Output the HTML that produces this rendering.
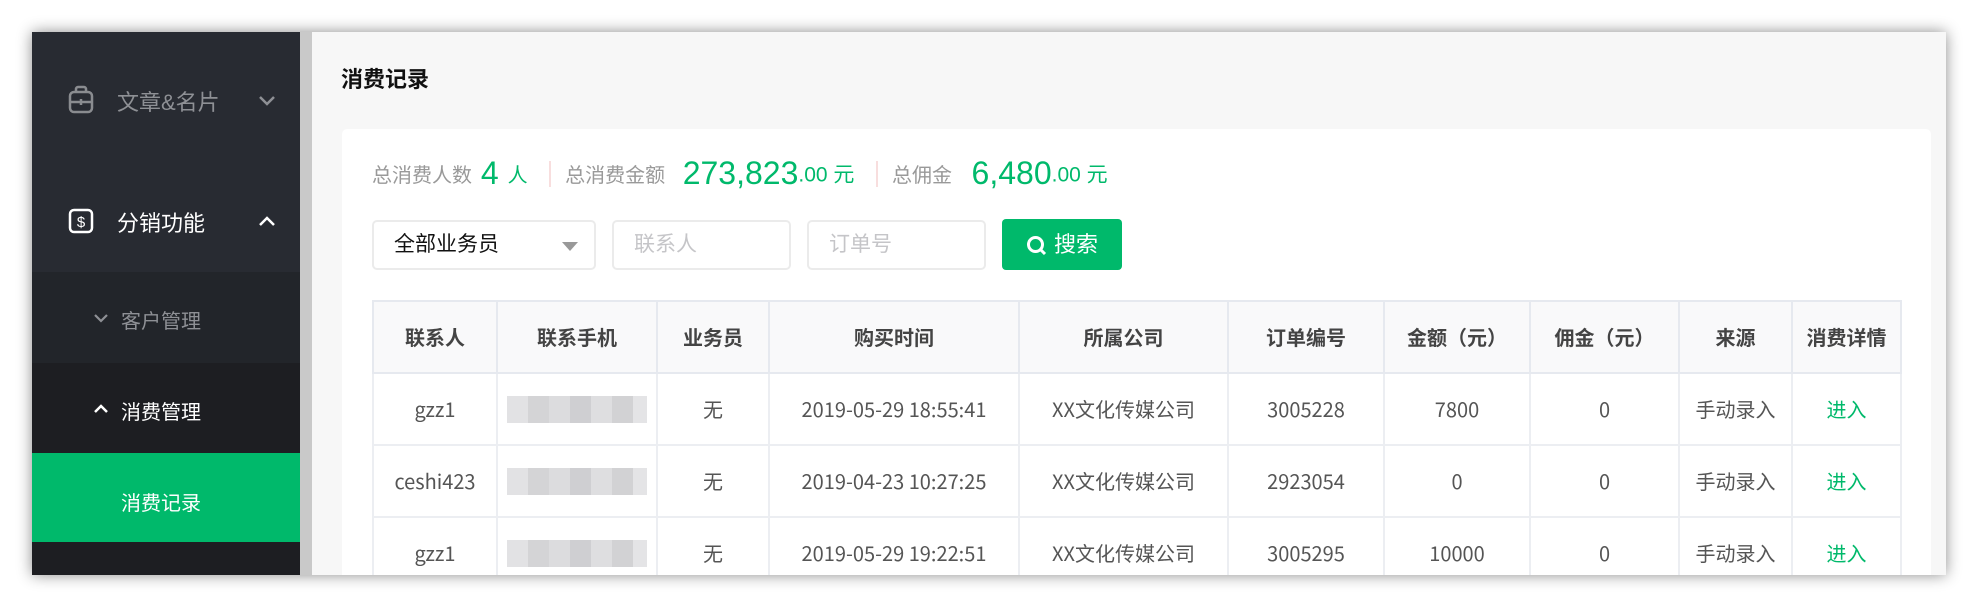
<!DOCTYPE html>
<html><head><meta charset="utf-8"><style>
*{box-sizing:border-box;margin:0;padding:0}
body{width:1978px;height:608px;background:#fff;font-family:"Liberation Sans","Noto Sans CJK SC",sans-serif;position:relative;overflow:hidden}
.win{position:absolute;left:32px;top:32px;width:1914px;height:543px;background:#f7f7f7;box-shadow:0 0 14px rgba(0,0,0,.45);overflow:hidden}
.side{position:absolute;left:0;top:0;width:268px;height:543px;background:#1d1e22}
.stripe{position:absolute;left:268px;top:0;width:12px;height:543px;background:#c9c9c9}
.abs{position:absolute}
.card{position:absolute;left:310px;top:97px;width:1589px;height:480px;background:#fff;border-radius:5px}
.g{color:#00b96b}
.box{position:absolute;border:2px solid #ebebeb;border-radius:5px;height:50px;top:91px;font-size:21px;line-height:46px;padding-left:20px}
table{position:absolute;left:30px;top:171px;border-collapse:collapse;font-size:20px;color:#555;table-layout:fixed;font-family:"Noto Sans CJK SC","Liberation Sans",sans-serif}
td,th{border:2px solid #eceef2;text-align:center;height:72px;line-height:24px}
th{background:#f9f9fa;font-weight:bold;font-size:20px;color:#444;border-color:#e6e9ef}
.blur{display:inline-block;width:140px;height:27px;background:linear-gradient(90deg,#e2e2e4 0 15%,#d4d4d6 15% 30%,#dcdcde 30% 45%,#cfcfd2 45% 60%,#dedee0 60% 75%,#d2d2d4 75% 90%,#e4e4e6 90%);vertical-align:middle}
a{color:#00b96b;text-decoration:none}
</style></head><body>
<div class="win">
 <div class="side">
  <div class="abs" style="left:0;top:0;width:268px;height:240px;background:#282b32"></div>
  <div class="abs" style="left:0;top:240px;width:268px;height:91px;background:#22252a"></div>
  <div class="abs" style="left:0;top:421px;width:268px;height:89px;background:#00b96b"></div>
  <svg class="abs" style="left:36px;top:53px" width="26" height="30" viewBox="0 0 26 30"><rect x="2" y="7" width="22" height="20" rx="4" fill="none" stroke="#8a8c90" stroke-width="2.5"/><path d="M8 7V4a2 2 0 0 1 2-2h6a2 2 0 0 1 2 2v3M2 17h22M13 14v6" stroke="#8a8c90" stroke-width="2.5" fill="none"/></svg>
  <div class="abs" style="left:85px;top:53px;font-size:22px;color:#8e9095">文章&amp;名片</div>
  <svg class="abs" style="left:226px;top:63px" width="18" height="12"><path d="M2 2l7 7 7-7" stroke="#8e9095" stroke-width="2.5" fill="none"/></svg>
  <svg class="abs" style="left:36px;top:176px" width="26" height="26" viewBox="0 0 26 26"><rect x="2" y="2" width="22" height="22" rx="4" fill="none" stroke="#fff" stroke-width="2.5"/><text x="13" y="19" font-size="15" fill="#fff" text-anchor="middle" font-family="Liberation Sans">$</text></svg>
  <div class="abs" style="left:85px;top:174px;font-size:22px;color:#fff">分销功能</div>
  <svg class="abs" style="left:226px;top:183px" width="18" height="12"><path d="M2 10l7-7 7 7" stroke="#fff" stroke-width="2.5" fill="none"/></svg>
  <svg class="abs" style="left:61px;top:281px" width="16" height="12"><path d="M2 2l6 6 6-6" stroke="#8e9095" stroke-width="2.2" fill="none"/></svg>
  <div class="abs" style="left:89px;top:273px;font-size:20px;color:#8e9095">客户管理</div>
  <svg class="abs" style="left:61px;top:371px" width="16" height="12"><path d="M2 9l6-6 6 6" stroke="#fff" stroke-width="2.5" fill="none"/></svg>
  <div class="abs" style="left:89px;top:364px;font-size:20px;color:#fff">消费管理</div>
  <div class="abs" style="left:89px;top:455px;font-size:20px;color:#fff">消费记录</div>
 </div>
 <div class="stripe"></div>
 <div class="abs" style="left:309px;top:30px;font-size:22px;font-weight:bold;color:#111">消费记录</div>
 <div class="card">
  <div class="abs" style="left:30px;top:26px;white-space:nowrap;color:#999;font-size:20px">
   <span style="vertical-align:middle">总消费人数</span><span class="g" style="font-size:32px;vertical-align:middle"> 4 </span><span class="g" style="font-size:20px;vertical-align:middle">人</span>
   <span style="display:inline-block;width:2px;height:26px;background:#f8dede;margin:0 14px 0 16px;vertical-align:middle"></span><span style="vertical-align:middle">总消费金额</span>
   <span class="g" style="font-size:32px;vertical-align:middle;margin-left:12px">273,823</span><span class="g" style="font-size:21px;vertical-align:middle">.00 元</span>
   <span style="display:inline-block;width:2px;height:26px;background:#f8dede;margin:0 14px 0 16px;vertical-align:middle"></span><span style="vertical-align:middle">总佣金</span>
   <span class="g" style="font-size:32px;vertical-align:middle;margin-left:14px">6,480</span><span class="g" style="font-size:21px;vertical-align:middle">.00 元</span>
  </div>
  <div class="box" style="left:30px;width:224px;color:#111">全部业务员<span style="position:absolute;right:16px;top:20px;width:0;height:0;border-left:8px solid transparent;border-right:8px solid transparent;border-top:9px solid #999"></span></div>
  <div class="box" style="left:270px;width:179px;color:#c5c5c8">联系人</div>
  <div class="box" style="left:465px;width:179px;color:#c5c5c8">订单号</div>
  <div class="abs" style="left:660px;top:90px;width:120px;height:51px;background:#00b96b;border-radius:4px;color:#fff;font-size:22px;line-height:51px">
   <svg class="abs" style="left:24px;top:16px" width="22" height="22"><circle cx="9.5" cy="9.5" r="7" stroke="#fff" stroke-width="3" fill="none"/><path d="M14 14l5 5" stroke="#fff" stroke-width="3"/></svg>
   <span style="position:absolute;left:52px">搜索</span></div>
  <table>
   <colgroup><col style="width:124px"><col style="width:160px"><col style="width:112px"><col style="width:250px"><col style="width:209px"><col style="width:156px"><col style="width:146px"><col style="width:149px"><col style="width:113px"><col style="width:109px"></colgroup>
   <tr><th>联系人</th><th>联系手机</th><th>业务员</th><th>购买时间</th><th>所属公司</th><th>订单编号</th><th>金额（元）</th><th>佣金（元）</th><th>来源</th><th>消费详情</th></tr>
   <tr><td>gzz1</td><td><span class="blur"></span></td><td>无</td><td>2019-05-29 18:55:41</td><td>XX文化传媒公司</td><td>3005228</td><td>7800</td><td>0</td><td>手动录入</td><td><a>进入</a></td></tr>
   <tr><td>ceshi423</td><td><span class="blur"></span></td><td>无</td><td>2019-04-23 10:27:25</td><td>XX文化传媒公司</td><td>2923054</td><td>0</td><td>0</td><td>手动录入</td><td><a>进入</a></td></tr>
   <tr><td>gzz1</td><td><span class="blur"></span></td><td>无</td><td>2019-05-29 19:22:51</td><td>XX文化传媒公司</td><td>3005295</td><td>10000</td><td>0</td><td>手动录入</td><td><a>进入</a></td></tr>
  </table>
 </div>
</div>
</body></html>
